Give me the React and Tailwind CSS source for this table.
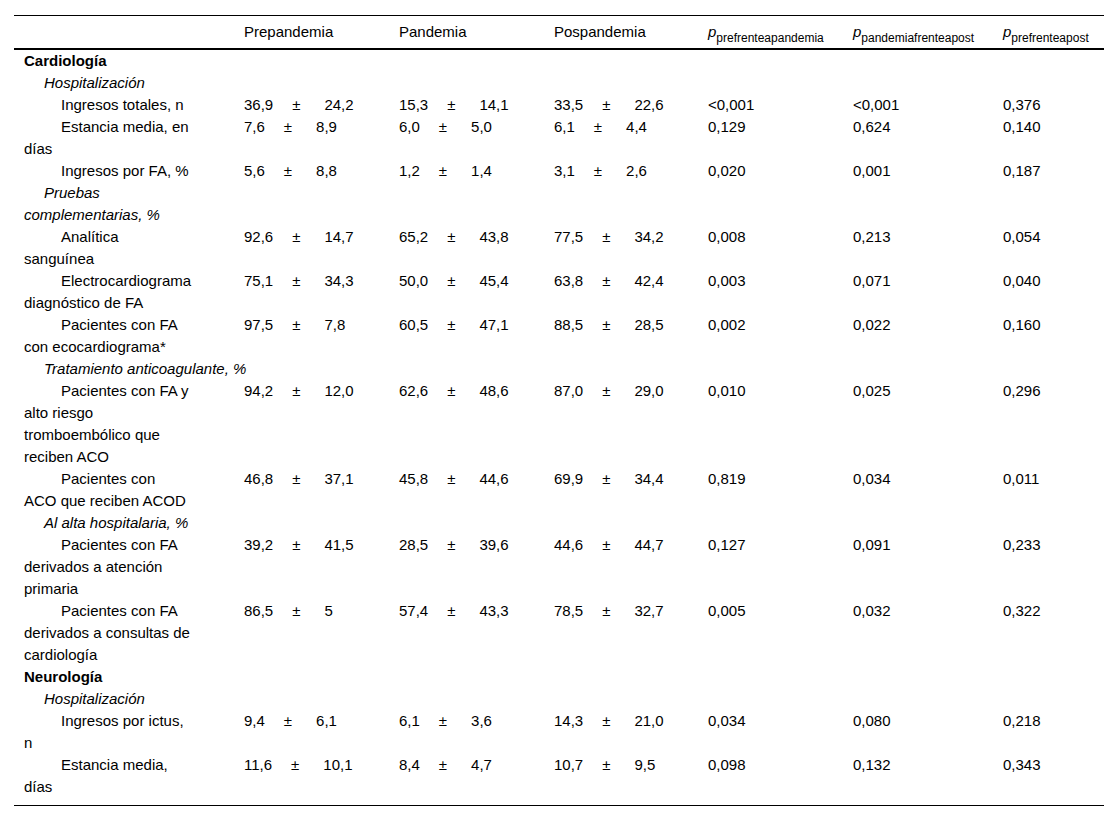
import React from "react";

const rows = [
  { type: "section", label: "Cardiología" },
  { type: "group", label: ["Hospitalización"] },
  {
    label: ["Ingresos totales, n"],
    pre: ["36,9", "24,2"],
    pan: ["15,3", "14,1"],
    pos: ["33,5", "22,6"],
    p: ["<0,001", "<0,001", "0,376"],
  },
  {
    label: ["Estancia media, en", "días"],
    pre: ["7,6", "8,9"],
    pan: ["6,0", "5,0"],
    pos: ["6,1", "4,4"],
    p: ["0,129", "0,624", "0,140"],
  },
  {
    label: ["Ingresos por FA, %"],
    pre: ["5,6", "8,8"],
    pan: ["1,2", "1,4"],
    pos: ["3,1", "2,6"],
    p: ["0,020", "0,001", "0,187"],
  },
  { type: "group", label: ["Pruebas", "complementarias, %"] },
  {
    label: ["Analítica", "sanguínea"],
    pre: ["92,6", "14,7"],
    pan: ["65,2", "43,8"],
    pos: ["77,5", "34,2"],
    p: ["0,008", "0,213", "0,054"],
  },
  {
    label: ["Electrocardiograma", "diagnóstico de FA"],
    pre: ["75,1", "34,3"],
    pan: ["50,0", "45,4"],
    pos: ["63,8", "42,4"],
    p: ["0,003", "0,071", "0,040"],
  },
  {
    label: ["Pacientes con FA", "con ecocardiograma*"],
    pre: ["97,5", "7,8"],
    pan: ["60,5", "47,1"],
    pos: ["88,5", "28,5"],
    p: ["0,002", "0,022", "0,160"],
  },
  { type: "group", label: ["Tratamiento anticoagulante, %"] },
  {
    label: ["Pacientes con FA y", "alto riesgo", "tromboembólico que", "reciben ACO"],
    pre: ["94,2", "12,0"],
    pan: ["62,6", "48,6"],
    pos: ["87,0", "29,0"],
    p: ["0,010", "0,025", "0,296"],
  },
  {
    label: ["Pacientes con", "ACO que reciben ACOD"],
    pre: ["46,8", "37,1"],
    pan: ["45,8", "44,6"],
    pos: ["69,9", "34,4"],
    p: ["0,819", "0,034", "0,011"],
  },
  { type: "group", label: ["Al alta hospitalaria, %"] },
  {
    label: ["Pacientes con FA", "derivados a atención", "primaria"],
    pre: ["39,2", "41,5"],
    pan: ["28,5", "39,6"],
    pos: ["44,6", "44,7"],
    p: ["0,127", "0,091", "0,233"],
  },
  {
    label: ["Pacientes con FA", "derivados a consultas de", "cardiología"],
    pre: ["86,5", "5"],
    pan: ["57,4", "43,3"],
    pos: ["78,5", "32,7"],
    p: ["0,005", "0,032", "0,322"],
  },
  { type: "section", label: "Neurología" },
  { type: "group", label: ["Hospitalización"] },
  {
    label: ["Ingresos por ictus,", "n"],
    pre: ["9,4", "6,1"],
    pan: ["6,1", "3,6"],
    pos: ["14,3", "21,0"],
    p: ["0,034", "0,080", "0,218"],
  },
  {
    label: ["Estancia media,", "días"],
    pre: ["11,6", "10,1"],
    pan: ["8,4", "4,7"],
    pos: ["10,7", "9,5"],
    p: ["0,098", "0,132", "0,343"],
  },
];

function Lines({ lines }) {
  return lines.map((l, i) => (
    <React.Fragment key={i}>
      {i > 0 && <br />}
      {l}
    </React.Fragment>
  ));
}

function MeanSd({ v }) {
  return (
    <span className="whitespace-nowrap">
      {v[0]}
      <span className="ml-[19px] mr-[24px]">±</span>
      {v[1]}
    </span>
  );
}

function PHead({ sub }) {
  return (
    <>
      <i>p</i>
      <sub className="text-[12px] top-[5px]">{sub}</sub>
    </>
  );
}

export default function App() {
  const last = rows.length - 1;

  return (
    <div className="min-h-[822px] bg-white pt-[15px] pl-[14px] text-black font-['Liberation_Sans',Arial,sans-serif] text-[15px] leading-[22px]">
      <table className="w-[1090px] table-fixed border-collapse border-t border-black text-left">
        <colgroup>
          <col className="w-[220px]" />
          <col className="w-[155px]" />
          <col className="w-[155px]" />
          <col className="w-[154px]" />
          <col className="w-[145px]" />
          <col className="w-[150px]" />
          <col className="w-[111px]" />
        </colgroup>
        <thead>
          <tr className="border-b-2 border-black">
            <th className="pl-[10px] pt-[5px] pb-[5px] font-normal"></th>
            <th className="pl-[10px] pt-[5px] pb-[5px] font-normal">Prepandemia</th>
            <th className="pl-[10px] pt-[5px] pb-[5px] font-normal">Pandemia</th>
            <th className="pl-[10px] pt-[5px] pb-[5px] font-normal">Pospandemia</th>
            <th className="pl-[10px] pt-[5px] pb-[5px] font-normal whitespace-nowrap">
              <PHead sub="prefrenteapandemia" />
            </th>
            <th className="pl-[10px] pt-[5px] pb-[5px] font-normal whitespace-nowrap">
              <PHead sub="pandemiafrenteapost" />
            </th>
            <th className="pl-[10px] pt-[5px] pb-[5px] font-normal whitespace-nowrap">
              <PHead sub="prefrenteapost" />
            </th>
          </tr>
        </thead>
        <tbody className="border-b border-black">
          {rows.map((r, i) => {
            const pad = i === last ? "pl-[10px] pb-[7px] align-top" : "pl-[10px] align-top";

            if (r.type === "section") {
              return (
                <tr key={i}>
                  <td className={pad + " font-bold"}>{r.label}</td>
                  <td colSpan={6}></td>
                </tr>
              );
            }

            if (r.type === "group") {
              return (
                <tr key={i}>
                  <td className={pad + " italic indent-[20px] whitespace-nowrap"}>
                    <Lines lines={r.label} />
                  </td>
                  <td colSpan={6}></td>
                </tr>
              );
            }

            return (
              <tr key={i}>
                <td className={pad + " indent-[37px] whitespace-nowrap"}>
                  <Lines lines={r.label} />
                </td>
                <td className={pad}>
                  <MeanSd v={r.pre} />
                </td>
                <td className={pad}>
                  <MeanSd v={r.pan} />
                </td>
                <td className={pad}>
                  <MeanSd v={r.pos} />
                </td>
                {r.p.map((v, k) => (
                  <td key={k} className={pad}>
                    {v}
                  </td>
                ))}
              </tr>
            );
          })}
        </tbody>
      </table>
    </div>
  );
}
